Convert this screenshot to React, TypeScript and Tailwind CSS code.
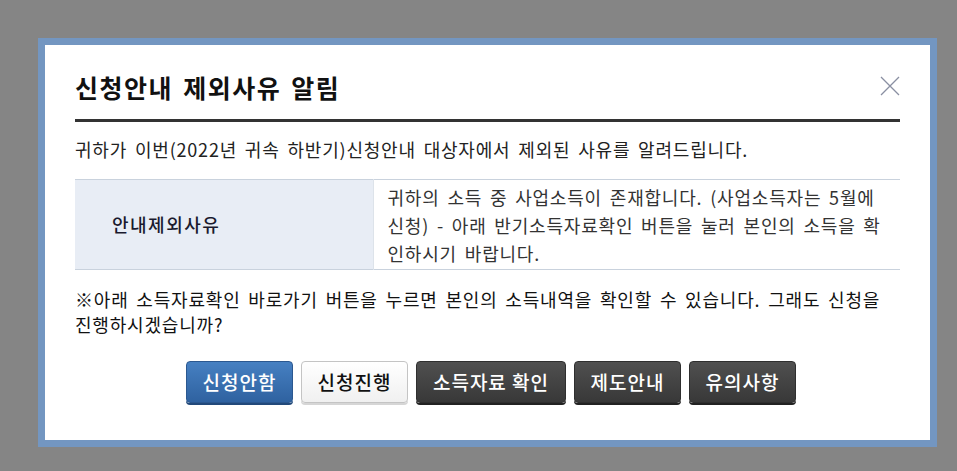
import React from 'react';

const font = { fontFamily: '"Noto Sans CJK KR", "Liberation Sans", sans-serif' };

const ExcludeNoticeModal: React.FC = () => {
  const blue = 'bg-gradient-to-b from-[#4680c2] to-[#2f62a0] text-white border-[#2b5890] shadow-[0_2px_0_#22497a]';
  const light = 'bg-gradient-to-b from-white to-[#f0f0f0] text-[#111] border-[#c4c4c4] shadow-[0_2px_0_#d6d6d6]';
  const dark = 'bg-gradient-to-b from-[#505050] to-[#383838] text-white border-[#2f2f2f] shadow-[0_2px_0_#222]';

  const buttons = [
    { label: '신청안함', cls: blue, w: 'w-[107px]' },
    { label: '신청진행', cls: light, w: 'w-[107px]' },
    { label: '소득자료 확인', cls: dark, w: 'w-[150px]' },
    { label: '제도안내', cls: dark, w: 'w-[107px]' },
    { label: '유의사항', cls: dark, w: 'w-[107px]' },
  ];

  return (
    <div className="w-[957px] h-[471px] bg-[#858585] pt-[38px] pl-[38px]" style={font}>
      <div className="w-[899px] h-[409px] border-[7px] border-[#7396c1] bg-white px-[30px] pt-[24px]">
        {/* header */}
        <div className="flex items-start justify-between h-[53px] border-b-[3px] border-[#333]">
          <h2 className="text-[25px] leading-[36px] font-bold text-[#111] tracking-[1.5px] [word-spacing:3px]">신청안내 제외사유 알림</h2>
          <button className="mt-[7px] w-[20px] h-[20px] text-[#8a8fa2]">
            <svg viewBox="0 0 20 20" className="w-[20px] h-[20px]" fill="none" stroke="currentColor" strokeWidth="1.3">
              <path d="M1 1 L19 19 M19 1 L1 19" />
            </svg>
          </button>
        </div>

        <div className="text-[18px] tracking-[0.8px] [word-spacing:3px]">
          <p className="mt-[15px] leading-[24px] text-[#222]">
            귀하가 이번(2022년 귀속 하반기)신청안내 대상자에서 제외된 사유를 알려드립니다.
          </p>

          {/* reason table */}
          <table className="mt-[18px] w-full border-collapse border-y border-[#c9d2dd] text-[#222]">
            <tbody>
              <tr>
                <th className="w-[298px] h-[90px] bg-[#e8edf5] text-left pl-[37px] font-medium tracking-[1.5px] text-[#1a1a2e]">안내제외사유</th>
                <td className="pl-[14px] pr-[4px] leading-[28px] text-[#333] border-l border-[#dde3ea]">
                  귀하의 소득 중 사업소득이 존재합니다. (사업소득자는 5월에<br />
                  신청) - 아래 반기소득자료확인 버튼을 눌러 본인의 소득을 확<br />
                  인하시기 바랍니다.
                </td>
              </tr>
            </tbody>
          </table>

          <p className="mt-[17px] leading-[25px] text-[#111]">
            <span className="font-bold">※</span>아래 소득자료확인 바로가기 버튼을 누르면 본인의 소득내역을 확인할 수 있습니다. 그래도 신청을<br />
            진행하시겠습니까?
          </p>
        </div>

        {/* action buttons */}
        <div className="mt-[24px] flex justify-center gap-[8px] pl-[7px]">
          {buttons.map((b) => (
            <button
              key={b.label}
              className={`h-[42px] rounded-[4px] border text-[19px] font-medium tracking-[1px] ${b.w} ${b.cls}`}
            >
              {b.label}
            </button>
          ))}
        </div>
      </div>
    </div>
  );
};

export default function App() {
  return <ExcludeNoticeModal />;
}
